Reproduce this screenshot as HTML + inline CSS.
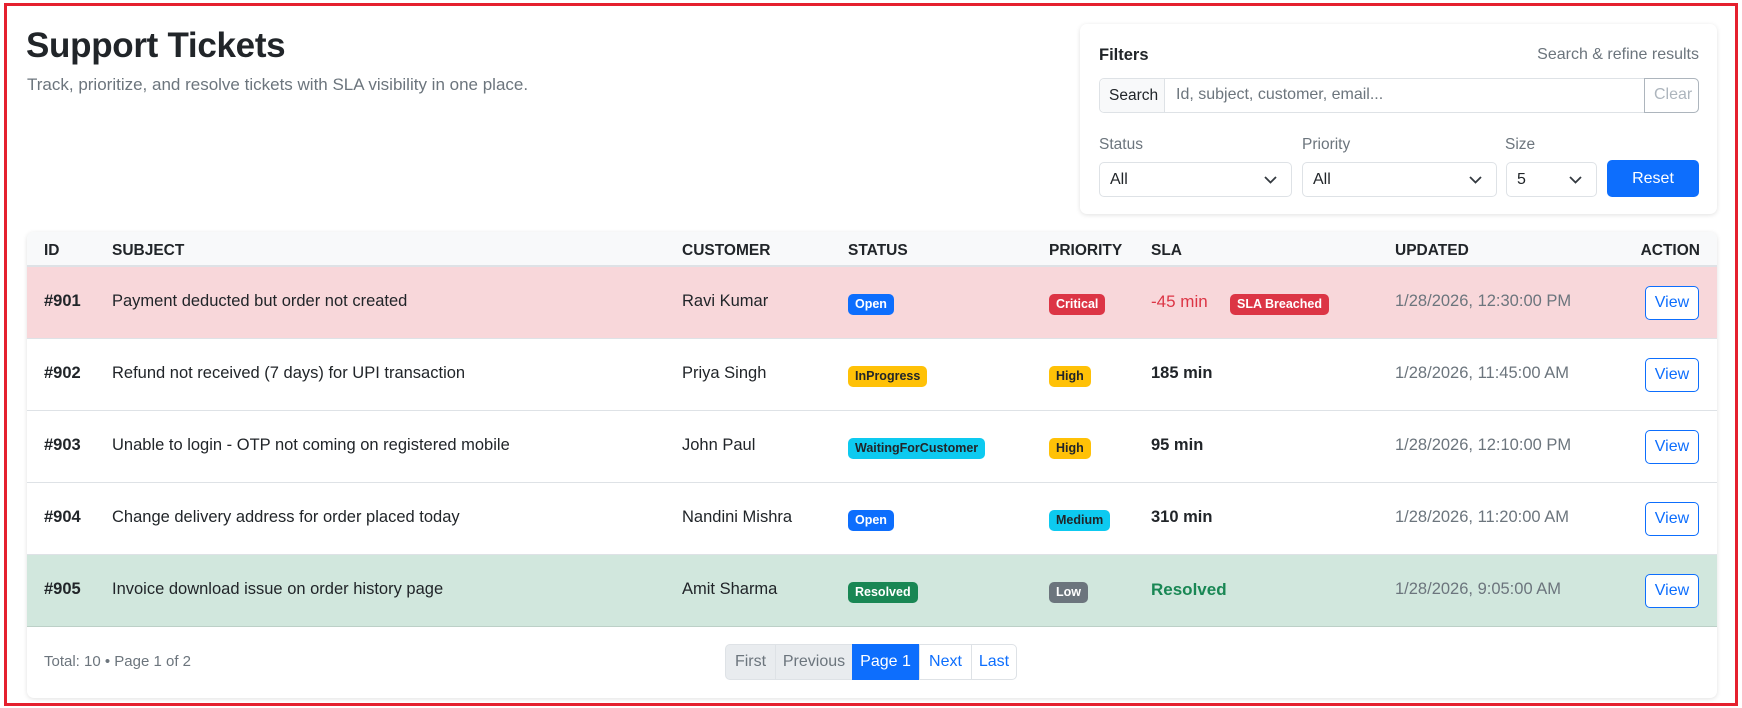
<!DOCTYPE html>
<html><head><meta charset="utf-8"><style>
*{box-sizing:border-box;margin:0;padding:0}
body{width:1742px;height:708px;background:#fff;font-family:"Liberation Sans",sans-serif;color:#212529;position:relative;overflow:hidden}
.frame{position:absolute;left:4px;top:3px;width:1734px;height:703px;border:3px solid #e5202e}
.abs{position:absolute}
h1{position:absolute;left:26px;top:26px;font-size:35px;font-weight:bold;letter-spacing:-0.3px}
.sub{left:27px;top:75px;font-size:17px;color:#6c757d}
.card{position:absolute;background:#fff;border-radius:7px;box-shadow:0 1px 5px rgba(0,0,0,.12)}
.inp{position:absolute;border:1px solid #dee2e6;border-radius:5px;background:#fff;font-size:16px}
.lbl{position:absolute;font-size:15.5px;color:#6c757d}
.sel{position:absolute;border:1px solid #dee2e6;border-radius:5px;height:35px;font-size:16px;padding:8px 10px}
.sel svg{position:absolute;right:14px;top:13px}
.row{position:absolute;left:27px;width:1690px;height:72px;border-bottom:1px solid #dee2e6;font-size:16.5px}
.row span{position:absolute;top:25px}
.id{left:17px;font-weight:bold}
.b{position:absolute;top:27px;height:21px;line-height:21px;padding:0 7px;border-radius:5px;color:#fff;font-size:12.5px;font-weight:bold}
.view{position:absolute;left:1618px;top:19px;width:54px;height:34px;border:1px solid #0d6efd;border-radius:5px;color:#0d6efd;font-size:16px;text-align:center;line-height:32px;background:#fff}
.th{position:absolute;top:10px;font-size:15.5px;font-weight:bold}
.upd{left:1368px;color:#6c757d}
.sla{left:1124px;font-weight:bold}
.pg{position:absolute;top:644px;height:36px;line-height:34px;font-size:16px;text-align:center;border:1px solid #dee2e6}
</style></head><body>
<div class="frame"></div>
<h1>Support Tickets</h1>
<div class="abs sub">Track, prioritize, and resolve tickets with SLA visibility in one place.</div>

<div class="card" style="left:1080px;top:24px;width:637px;height:190px">
  <div class="abs" style="left:19px;top:22px;font-size:16.5px;font-weight:bold">Filters</div>
  <div class="abs" style="right:18px;top:22px;font-size:16px;color:#6c757d">Search &amp; refine results</div>
  <div class="inp" style="left:19px;top:54px;width:600px;height:35px">
    <div class="abs" style="left:0;top:0;width:65px;height:33px;background:#f8f9fa;border-right:1px solid #dee2e6;border-radius:5px 0 0 5px;padding:8px 0 0 9px;font-size:15.5px">Search</div>
    <div class="abs" style="left:76px;top:7px;color:#6c757d">Id, subject, customer, email...</div>
    <div class="abs" style="right:-1px;top:-1px;width:55px;height:35px;border:1px solid #adb5bd;border-radius:0 5px 5px 0;color:#adb5bd;padding:7px 0 0 9px">Clear</div>
  </div>
  <div class="lbl" style="left:19px;top:112px">Status</div>
  <div class="lbl" style="left:222px;top:112px">Priority</div>
  <div class="lbl" style="left:425px;top:112px">Size</div>
  <div class="sel" style="left:19px;top:138px;width:193px">All<svg width="13" height="8" viewBox="0 0 13 8"><path d="M1 1l5.5 5.5L12 1" fill="none" stroke="#343a40" stroke-width="1.8"/></svg></div>
  <div class="sel" style="left:222px;top:138px;width:195px">All<svg width="13" height="8" viewBox="0 0 13 8"><path d="M1 1l5.5 5.5L12 1" fill="none" stroke="#343a40" stroke-width="1.8"/></svg></div>
  <div class="sel" style="left:426px;top:138px;width:91px">5<svg width="13" height="8" viewBox="0 0 13 8"><path d="M1 1l5.5 5.5L12 1" fill="none" stroke="#343a40" stroke-width="1.8"/></svg></div>
  <div class="abs" style="left:527px;top:136px;width:92px;height:37px;background:#0d6efd;border-radius:5px;color:#fff;font-size:16px;text-align:center;line-height:37px">Reset</div>
</div>

<div class="card" style="left:27px;top:232px;width:1690px;height:466px"></div>
<div class="abs" style="left:27px;top:232px;width:1690px;height:35px;background:#f8f9fa;border-bottom:2px solid #dee2e6;border-radius:7px 7px 0 0">
  <div class="th" style="left:17px">ID</div>
  <div class="th" style="left:85px">SUBJECT</div>
  <div class="th" style="left:655px">CUSTOMER</div>
  <div class="th" style="left:821px">STATUS</div>
  <div class="th" style="left:1022px">PRIORITY</div>
  <div class="th" style="left:1124px">SLA</div>
  <div class="th" style="left:1368px">UPDATED</div>
  <div class="th" style="right:17px">ACTION</div>
</div>

<div class="row" style="top:267px;background:#f8d7da">
  <span class="id">#901</span><span style="left:85px">Payment deducted but order not created</span><span style="left:655px">Ravi Kumar</span>
  <div class="b" style="left:821px;background:#0d6efd">Open</div>
  <div class="b" style="left:1022px;background:#dc3545">Critical</div>
  <span style="left:1124px;color:#dc3545;font-size:17px">-45 min</span>
  <div class="b" style="left:1203px;background:#dc3545">SLA Breached</div>
  <span class="upd">1/28/2026, 12:30:00 PM</span><div class="view">View</div>
</div>
<div class="row" style="top:339px">
  <span class="id">#902</span><span style="left:85px">Refund not received (7 days) for UPI transaction</span><span style="left:655px">Priya Singh</span>
  <div class="b" style="left:821px;background:#ffc107;color:#212529">InProgress</div>
  <div class="b" style="left:1022px;background:#ffc107;color:#212529">High</div>
  <span class="sla">185 min</span>
  <span class="upd">1/28/2026, 11:45:00 AM</span><div class="view">View</div>
</div>
<div class="row" style="top:411px">
  <span class="id">#903</span><span style="left:85px">Unable to login - OTP not coming on registered mobile</span><span style="left:655px">John Paul</span>
  <div class="b" style="left:821px;background:#0dcaf0;color:#212529">WaitingForCustomer</div>
  <div class="b" style="left:1022px;background:#ffc107;color:#212529">High</div>
  <span class="sla">95 min</span>
  <span class="upd">1/28/2026, 12:10:00 PM</span><div class="view">View</div>
</div>
<div class="row" style="top:483px">
  <span class="id">#904</span><span style="left:85px">Change delivery address for order placed today</span><span style="left:655px">Nandini Mishra</span>
  <div class="b" style="left:821px;background:#0d6efd">Open</div>
  <div class="b" style="left:1022px;background:#0dcaf0;color:#212529">Medium</div>
  <span class="sla">310 min</span>
  <span class="upd">1/28/2026, 11:20:00 AM</span><div class="view">View</div>
</div>
<div class="row" style="top:555px;background:#d1e7dd;border-bottom-color:#bcd0c7">
  <span class="id">#905</span><span style="left:85px">Invoice download issue on order history page</span><span style="left:655px">Amit Sharma</span>
  <div class="b" style="left:821px;background:#198754">Resolved</div>
  <div class="b" style="left:1022px;background:#6c757d">Low</div>
  <span class="sla" style="color:#198754;font-size:17px">Resolved</span>
  <span class="upd">1/28/2026, 9:05:00 AM</span><div class="view">View</div>
</div>

<div class="abs" style="left:44px;top:653px;font-size:15px;color:#6c757d">Total: 10 • Page 1 of 2</div>
<div class="pg" style="left:725px;width:51px;background:#e9ecef;color:#6c757d;border-radius:5px 0 0 5px">First</div>
<div class="pg" style="left:775px;width:78px;background:#e9ecef;color:#6c757d">Previous</div>
<div class="pg" style="left:852px;width:67px;background:#0d6efd;color:#fff;border-color:#0d6efd">Page 1</div>
<div class="pg" style="left:919px;width:53px;color:#0d6efd">Next</div>
<div class="pg" style="left:971px;width:46px;color:#0d6efd;border-radius:0 5px 5px 0">Last</div>
</body></html>
